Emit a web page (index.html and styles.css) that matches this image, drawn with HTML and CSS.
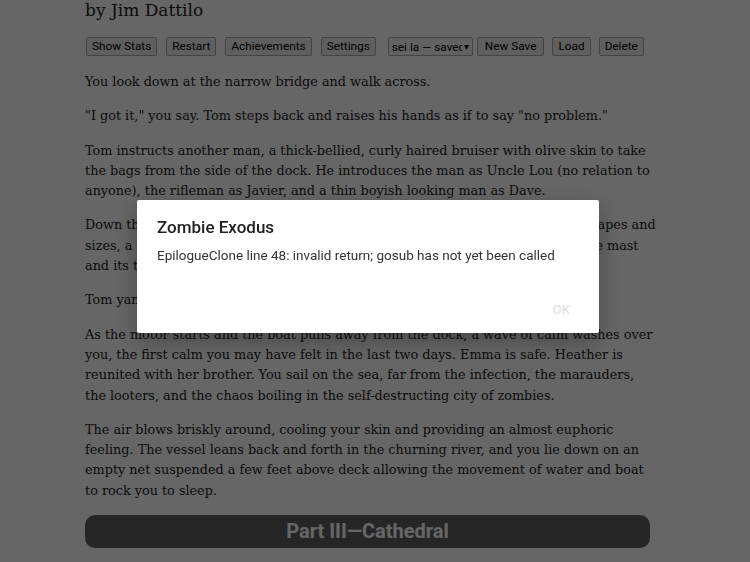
FILE: index.html
```html
<!DOCTYPE html>
<html>
<head>
<meta charset="utf-8">
<link rel="stylesheet" href="styles.css">
</head>
<body>
<div class="page">
  <h2 class="author">by Jim Dattilo</h2>
  <div class="buttons">
    <button class="btn">Show Stats</button>
    <button class="btn">Restart</button>
    <button class="btn">Achievements</button>
    <button class="btn btn-settings">Settings</button>
    <div class="select"><span class="sel-text">sei la — saved</span><span class="sel-arrow">▾</span></div>
    <button class="btn btn-new">New Save</button>
    <button class="btn btn-load">Load</button>
    <button class="btn">Delete</button>
  </div>
  <div class="story">
    <p>You look down at the narrow bridge and walk across.</p>
    <p>"I got it," you say. Tom steps back and raises his hands as if to say "no problem."</p>
    <p>Tom instructs another man, a thick-bellied, curly haired bruiser with olive skin to take the bags from the side of the dock. He introduces the man as Uncle Lou (no relation to anyone), the rifleman as Javier, and a thin boyish looking man as Dave.</p>
    <p>Down the dock, sailboats and yachts rock gently in the water in all different shapes and sizes, a few of them half-sunk, others listing to one side under the weight of the mast and its tangled rigging.</p>
    <p>Tom yanks the cord and the motor sputters to life.</p>
    <p>As the motor starts and the boat pulls away from the dock, a wave of calm washes over you, the first calm you may have felt in the last two days. Emma is safe. Heather is reunited with her brother. You sail on the sea, far from the infection, the marauders, the looters, and the chaos boiling in the self-destructing city of zombies.</p>
    <p>The air blows briskly around, cooling your skin and providing an almost euphoric feeling. The vessel leans back and forth in the churning river, and you lie down on an empty net suspended a few feet above deck allowing the movement of water and boat to rock you to sleep.</p>
  </div>
  <h2 class="part">Part III—Cathedral</h2>
</div>
<div class="overlay"></div>
<div class="dialog">
  <h3 class="dlg-title">Zombie Exodus</h3>
  <p class="dlg-msg">EpilogueClone line 48: invalid return; gosub has not yet been called</p>
  <div class="dlg-actions"><span class="dlg-ok">OK</span></div>
</div>
</body>
</html>
```
FILE: styles.css
```css
html, body {
  margin: 0;
  padding: 0;
  background: #ffffff;
  overflow: hidden;
  height: 562px;
}
.page {
  width: 565px;
  margin: -3px 0 0 85px;
  font-family: "DejaVu Serif", serif;
  color: #333;
}
.author {
  font-family: "DejaVu Serif", serif;
  font-weight: normal;
  font-size: 17px;
  margin: 0;
  line-height: 26px;
  color: #222;
}
.buttons {
  display: flex;
  align-items: center;
  margin: 14px 0 0 1px;
  height: 19px;
}
.btn {
  font-family: Roboto, sans-serif;
  font-size: 11.8px;
  height: 19px;
  padding: 0 5px;
  margin: 0 9px 0 0;
  background: #eeeeee;
  border: 1px solid #aaaaaa;
  border-radius: 2px;
  color: #000;
  line-height: 17px;
  white-space: nowrap;
  flex: none;
}
.btn-settings { margin-right: 12px; }
.btn-new { margin-right: 8px; padding: 0 7px; }
.btn-load { margin-right: 8px; }
.select {
  display: flex;
  align-items: center;
  margin: 0 4px 0 0;
  width: 85px;
  height: 19px;
  box-sizing: border-box;
  border: 1px solid #aaaaaa;
  border-radius: 2px;
  background: #f4f4f4;
  font-family: Roboto, sans-serif;
  font-size: 11.8px;
  color: #000;
  overflow: hidden;
  flex: none;
}
.sel-text {
  flex: 1;
  white-space: nowrap;
  overflow: hidden;
  padding-left: 3px;
}
.sel-arrow {
  font-size: 10px;
  padding: 0 3px 0 2px;
}
.story {
  margin: 16px -8px 0 0;
}
.story p {
  font-size: 12.8px;
  line-height: 20.3px;
  margin: 14px 0 0 0;
  color: #222;
}
.part {
  margin: 14px 0 0 0;
  height: 33px;
  border-radius: 10px;
  background: #5f5f5f;
  color: #ffffff;
  font-family: Roboto, sans-serif;
  font-weight: 700;
  font-size: 20px;
  line-height: 33px;
  text-align: center;
}
.overlay {
  position: fixed;
  inset: 0;
  background: rgba(0, 0, 0, 0.6);
}
.dialog {
  position: fixed;
  left: 137px;
  top: 200px;
  width: 462px;
  height: 133px;
  box-sizing: border-box;
  background: #ffffff;
  border-radius: 2px;
  padding: 17px 20px 0 20px;
  font-family: Roboto, sans-serif;
  box-shadow: 0 8px 24px rgba(0, 0, 0, 0.3);
  display: flex;
  flex-direction: column;
}
.dlg-title {
  margin: 0;
  font-size: 17px;
  font-weight: 500;
  color: #212121;
  line-height: 20px;
}
.dlg-msg {
  margin: 9px 0 0 0;
  font-size: 13.5px;
  line-height: 18px;
  color: #333;
}
.dlg-actions {
  margin-top: auto;
  display: flex;
  justify-content: flex-end;
  padding: 0 9px 16px 0;
}
.dlg-ok {
  font-size: 13px;
  font-weight: 500;
  color: #e2e2e2;
}
```
